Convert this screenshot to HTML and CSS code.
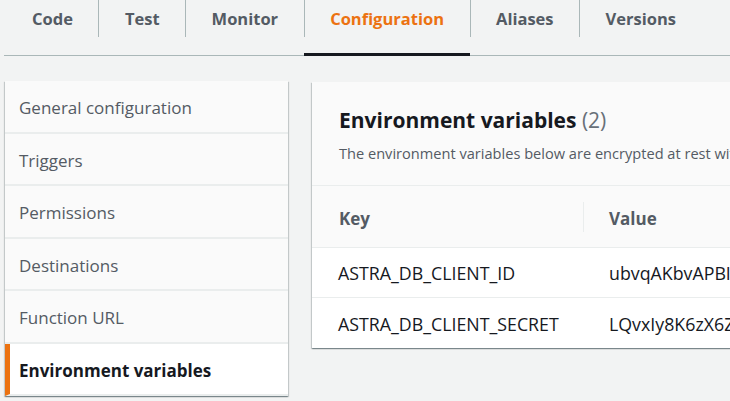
FILE: index.html
```html
<!DOCTYPE html>
<html lang="en">
<head>
<meta charset="utf-8">
<title>Configuration</title>
<link rel="stylesheet" href="styles.css">
</head>
<body>
<nav class="tabs">
  <div class="tab"><span class="tab-label first">Code</span></div>
  <div class="tab"><span class="tab-label">Test</span></div>
  <div class="tab"><span class="tab-label">Monitor</span></div>
  <div class="tab active"><span class="tab-label">Configuration</span></div>
  <div class="tab"><span class="tab-label">Aliases</span></div>
  <div class="tab"><span class="tab-label">Versions</span></div>
</nav>
<div class="content">
  <aside class="side">
    <div class="side-item">General configuration</div>
    <div class="side-item">Triggers</div>
    <div class="side-item">Permissions</div>
    <div class="side-item">Destinations</div>
    <div class="side-item">Function URL</div>
    <div class="side-item active">Environment variables</div>
  </aside>
  <section class="card">
    <header class="card-head">
      <h2 class="card-title">Environment variables <span class="count">(2)</span></h2>
      <p class="card-desc">The environment variables below are encrypted at rest with the default Lambda service key.</p>
    </header>
    <div class="row head-row">
      <div class="cell th">Key</div>
      <div class="cell th divider">Value</div>
    </div>
    <div class="row">
      <div class="cell">ASTRA_DB_CLIENT_ID</div>
      <div class="cell val">ubvqAKbvAPBIIzFmKcWwdLxZ</div>
    </div>
    <div class="row last">
      <div class="cell">ASTRA_DB_CLIENT_SECRET</div>
      <div class="cell val">LQvxIy8K6zX6ZqUeNnRtSpHa</div>
    </div>
  </section>
</div>
</body>
</html>
```
FILE: styles.css
```css
html, body {
  margin: 0;
  padding: 0;
}
body {
  background: #f2f3f3;
  font-family: "Open Sans", "Noto Sans", "Liberation Sans", sans-serif;
  color: #16191f;
  width: 730px;
  height: 401px;
  overflow: hidden;
}
.tabs {
  display: flex;
  margin-left: 4px;
  height: 55px;
  border-bottom: 1px solid #aab7b8;
  padding-left: 2px;
}
.tab {
  display: flex;
  flex-direction: column;
  height: 55px;
  box-sizing: border-box;
}
.tab-label {
  display: block;
  height: 37px;
  line-height: 38px;
  padding: 0 25.5px;
  border-left: 1px solid #aab7b8;
  font-size: 16.5px;
  font-weight: 700;
  color: #545b64;
  white-space: nowrap;
}
.tab-label.first {
  border-left: none;
  padding-left: 26px;
}
.tab.active {
  border-bottom: 3px solid #16191f;
  margin-bottom: -1px;
  height: 56px;
}
.tab.active .tab-label {
  color: #ec7211;
}
.content {
  display: flex;
  gap: 24px;
  padding: 25px 0 0 5px;
  align-items: flex-start;
}
.side {
  flex: 0 0 283px;
  background: #fafafa;
  box-shadow: 0 1px 1px 0 rgba(0, 28, 36, 0.3), 1px 1px 1px 0 rgba(0, 28, 36, 0.15), -1px 1px 1px 0 rgba(0, 28, 36, 0.15);
}
.side-item {
  height: 50.5px;
  line-height: 53px;
  border-bottom: 2px solid #eaeded;
  padding-left: 14px;
  font-size: 17px;
  color: #545b64;
  white-space: nowrap;
}
.side-item.active {
  background: #ffffff;
  color: #16191f;
  font-weight: 700;
  border-left: 5px solid #ec7211;
  padding-left: 9px;
}
.card {
  flex: 0 0 600px;
  margin-top: 1px;
  background: #ffffff;
  box-shadow: 0 1px 1px 0 rgba(0, 28, 36, 0.3), 1px 1px 1px 0 rgba(0, 28, 36, 0.15), -1px 1px 1px 0 rgba(0, 28, 36, 0.15);
}
.card-head {
  background: #fafafa;
  padding: 25px 27px 22px;
  border-bottom: 1px solid #eaeded;
}
.card-title {
  margin: 0;
  font-size: 21px;
  line-height: 26px;
  font-weight: 700;
  color: #16191f;
  white-space: nowrap;
}
.count {
  font-weight: 400;
  color: #687078;
}
.card-desc {
  margin: 10px 0 0;
  font-size: 14.6px;
  line-height: 20px;
  color: #545b64;
  white-space: nowrap;
}
.row {
  display: grid;
  grid-template-columns: 271px 1fr;
  align-items: center;
  height: 49px;
  border-bottom: 1px solid #eaeded;
  font-size: 17.8px;
  background: #ffffff;
}
.row.last {
  border-bottom: none;
  height: 50px;
}
.head-row {
  height: 61px;
  background: #fafafa;
}
.cell {
  padding-left: 26px;
  white-space: nowrap;
  overflow: hidden;
  line-height: 24px;
  padding-top: 1px;
}
.th {
  font-size: 17px;
  font-weight: 700;
  color: #545b64;
  height: 30px;
  line-height: 33px;
  padding-left: 27px;
  padding-top: 0;
}
.th.divider {
  border-left: 1px solid #eaeded;
  padding-left: 25px;
}
.val {
  padding-left: 26px;
}
```
